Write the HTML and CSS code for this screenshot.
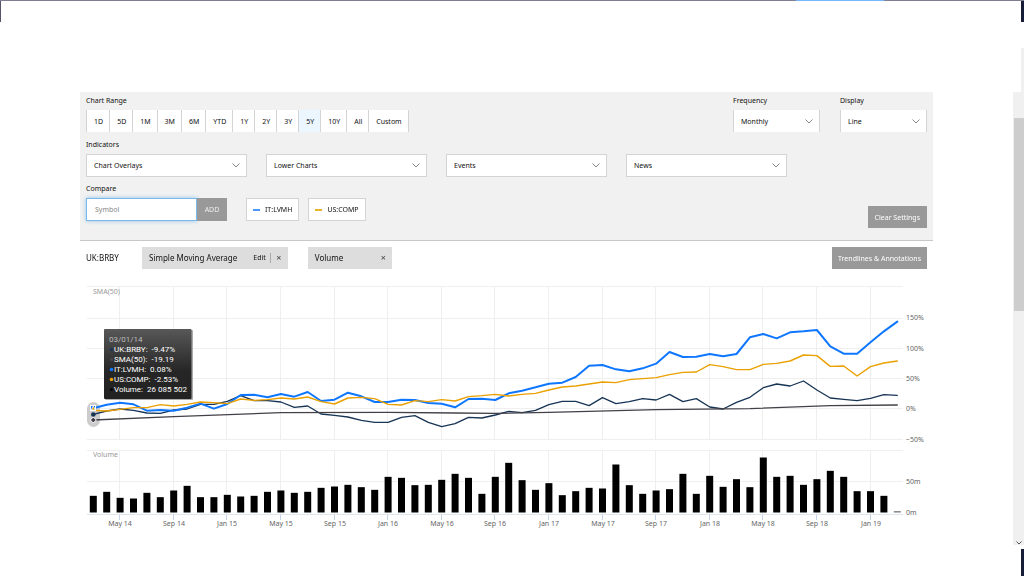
FILE: index.html
```html
<!DOCTYPE html>
<html lang="en">
<head>
<meta charset="utf-8">
<title>UK:BRBY chart</title>
<link rel="stylesheet" href="styles.css">
</head>
<body>
<div class="top-line"><span class="top-accent"></span></div>
<div class="page">
  <main class="content">
    <form class="settings">
      <div class="row row-range">
        <div>
          <div class="label" id="range-label">Chart Range</div>
          <div class="ranges" role="group" aria-labelledby="range-label">
            <button type="button">1D</button><button type="button">5D</button><button type="button">1M</button><button type="button">3M</button><button type="button">6M</button><button type="button">YTD</button><button type="button">1Y</button><button type="button">2Y</button><button type="button">3Y</button><button type="button" class="active">5Y</button><button type="button">10Y</button><button type="button">All</button><button type="button">Custom</button>
          </div>
        </div>
        <div class="view-options">
          <div class="field">
            <label class="label" for="frequency">Frequency</label>
            <select id="frequency" class="select"><option>Monthly</option></select>
          </div>
          <div class="field">
            <label class="label" for="display">Display</label>
            <select id="display" class="select"><option>Line</option></select>
          </div>
        </div>
      </div>
      <div class="label" id="indicators-label">Indicators</div>
      <div class="indicators" role="group" aria-labelledby="indicators-label">
        <select class="select tall" aria-label="Chart Overlays"><option>Chart Overlays</option></select>
        <select class="select tall" aria-label="Lower Charts"><option>Lower Charts</option></select>
        <select class="select tall" aria-label="Events"><option>Events</option></select>
        <select class="select tall" aria-label="News"><option>News</option></select>
      </div>
      <div class="row">
        <div>
          <label class="label" for="symbol">Compare</label>
          <div class="compare">
            <input id="symbol" class="symbol" type="text" placeholder="Symbol" autofocus>
            <button type="button" class="add">ADD</button>
            <button type="button" class="ticker ticker-blue">IT:LVMH</button>
            <button type="button" class="ticker ticker-gold">US:COMP</button>
          </div>
        </div>
        <button type="button" class="grey-button clear">Clear Settings</button>
      </div>
    </form>
    <div class="toolbar">
      <span class="instrument">UK:BRBY</span>
      <span class="chip"><span class="chip-name">Simple Moving Average</span><button type="button" class="edit">Edit</button><button type="button" class="close" aria-label="Remove Simple Moving Average">×</button></span>
      <span class="chip chip-volume"><span class="chip-name">Volume</span><button type="button" class="close" aria-label="Remove Volume">×</button></span>
      <button type="button" class="grey-button trend">Trendlines &amp; Annotations</button>
    </div>
    <svg class="chart" viewBox="80 280 853 256" role="img" aria-label="Price comparison and volume chart">
      <defs>
        <linearGradient id="tip" x1="0" y1="0" x2="0" y2="1">
          <stop offset="0" stop-color="#585858"/><stop offset="0.6" stop-color="#262626"/><stop offset="1" stop-color="#222"/>
        </linearGradient>
      </defs>
      <g id="grid" class="grid"></g>
      <g class="pane-title"><text x="93" y="294">SMA(50)</text><text x="93" y="457">Volume</text></g>
      <g id="bars"></g>
      <path class="axis" d="M87 514.500H903"/>
      <g id="axis-labels" class="axis-label"></g>
      <rect class="halo" x="87" y="402" width="13" height="25" rx="6.500"/>
      <g id="series" class="series"></g>
      <g>
        <rect x="90.500" y="405.500" width="5" height="5" fill="#0f77ff" stroke="#fff"/>
        <path d="M93.300 406l2 4h-4z" fill="#eaa000" stroke="#fff" stroke-width=".7"/>
        <circle cx="93.300" cy="414.500" r="2.300" fill="#173455"/>
        <path d="M93.300 417l3 3-3 3-3-3z" fill="#444048" stroke="#fff"/>
      </g>
      <g class="tooltip">
        <rect class="tip-shadow" x="105" y="330" width="88" height="70" rx="1"/>
        <rect x="104" y="329" width="87.500" height="70" rx="1" fill="url(#tip)"/>
        <text class="tip-date" x="109" y="342">03/01/14</text>
        <text x="114" y="352">UK:BRBY:&#160; -9.47%</text>
        <text x="114" y="362">SMA(50):&#160; -19.19</text>
        <text x="114" y="372">IT:LVMH:&#160; 0.08%</text>
        <text x="114" y="382">US:COMP:&#160; -2.53%</text>
        <text x="114" y="392">Volume:&#160; 26 085 502</text>
        <circle cx="111.500" cy="349.500" r="1.500" fill="#173455"/>
        <circle cx="111.500" cy="359.500" r="1.500" fill="#4b474f"/>
        <circle cx="111.500" cy="369.500" r="1.800" fill="#0f77ff"/>
        <circle cx="111.500" cy="379.500" r="1.800" fill="#eaa000"/>
        <circle cx="111.500" cy="389.500" r="1.500" fill="#000"/>
      </g>
    </svg>
  </main>
  <div class="rail">
    <div class="rail-dark"></div>
    <div class="rail-light"></div>
    <div class="scroll-track">
      <div class="scroll-thumb"></div>
      <svg class="scroll-arrow" viewBox="0 0 6 4"><path d="M.5.500L3 3 5.500.500"/></svg>
    </div>
    <div class="rail-dark rail-end"></div>
  </div>
</div>
<script src="chart.js"></script>
</body>
</html>
```
FILE: styles.css
```css
* { box-sizing: border-box; }
body {
  margin: 0;
  min-height: 100vh;
  display: flex;
  flex-direction: column;
  background: #fff;
  color: #111;
  font: 7px/10px "Noto Sans", "Open Sans", sans-serif;
}
button, input, select { font: inherit; color: inherit; margin: 0; border-radius: 0; }
button { border: 0; padding: 0; background: none; white-space: nowrap; }

.top-line { height: 1px; background: #807f92; display: flex; justify-content: flex-end; padding-right: 140px; }
.top-accent { width: 88px; background: #77b7fb; }
.page { flex: 1; display: flex; }
.content { flex: 1; min-width: 0; padding: 91px 80px 0; position: relative; }
.content::before { content: ""; position: absolute; left: 0; top: 0; width: 1px; height: 21px; background: #555568; }

.settings { background: #f1f1f1; border-bottom: 1px solid #c8c8c8; padding: 3px 6px 12px 6px; }
.row { display: flex; justify-content: space-between; }
.row-range { margin-bottom: 7px; }
.label { display: block; height: 15px; line-height: 11px; }
.ranges { display: flex; }
.ranges button { height: 22px; padding: 1px 6px 0 7px; background: #fff; border-left: 1px solid #d4d4d4; }
.ranges button:last-child { border-right: 1px solid #d4d4d4; }
.ranges .active { background: #ebf6ff; }
.view-options { display: flex; gap: 20px; }
.field { width: 87px; }
.select {
  display: block;
  width: 100%;
  height: 22px;
  padding: 1px 18px 0 7px;
  appearance: none;
  border: 1px solid #d4d4d4;
  border-width: 0 1px;
  background: #fff url("data:image/svg+xml,%3Csvg xmlns='http://www.w3.org/2000/svg' width='8' height='5'%3E%3Cpath d='M.5.5L4 4 7.5.5' fill='none' stroke='%23888'/%3E%3C/svg%3E") no-repeat right 6px center;
}
.select.tall { height: 23px; border-width: 1px; }
.indicators { display: grid; grid-template-columns: repeat(4, minmax(0, 1fr)); gap: 19px; margin: 0 140px 6px 0; }
.compare { display: flex; height: 23px; }
.symbol { width: 111px; padding: 0 8px; border: 1px solid #7db9e8; background: #fff; box-shadow: 0 0 4px #8fc4ee; outline: 0; }
.symbol::placeholder { color: #888; opacity: 1; }
.add { width: 30px; margin-right: 19px; background: #999; color: #eee; }
.ticker { display: flex; align-items: center; gap: 5px; padding: 0 6px; border: 1px solid #d4d4d4; background: #fff; margin-right: 9px; }
.ticker::before { content: ""; width: 7px; height: 2px; background: #4c96ff; }
.ticker-gold::before { background: #e8b62e; }
.grey-button { height: 22px; padding: 1px 7px 0; background: #999; color: #fff; }
.clear { margin-top: 23px; }

.toolbar { display: flex; align-items: center; padding: 6px 6px 0; margin-bottom: 11px; font-size: 8px; }
.instrument { width: 56px; }
.chip { display: flex; align-items: center; height: 22px; padding: 0 5px 0 7px; background: #ddd; margin-right: 20px; }
.edit { margin-left: 16px; font-size: 7px; }
.close { width: 8px; font-size: 9px; color: #444; }
.edit + .close { width: 13px; border-left: 1px solid #aaa; margin-left: 4px; padding-left: 4px; }
.chip-volume .close { margin-left: 36px; }
.trend { margin-left: auto; padding: 1px 6px 0; font-size: 7px; }

.chart { display: block; width: 100%; height: auto; font-size: 7px; }
.grid { stroke: #efefef; }
.pane-title { fill: #999; }
.axis { stroke: #dfe6f0; stroke-width: 1; }
.tick { stroke: #c4d4e6; }
.axis-label { fill: #666; }
.axis-label .month { text-anchor: middle; }
.halo { fill: #ccc; }
.series polyline { fill: none; stroke-linejoin: round; stroke-linecap: round; }
.tooltip { fill: #fff; font-family: Roboto, "Noto Sans", sans-serif; font-size: 8px; }
.tip-shadow { fill: #aaa; }
.tip-date { fill: #bbb; }

.rail { width: 11px; display: flex; flex-direction: column; align-items: flex-end; }
.rail-dark { width: 3px; height: 21px; background: #171c38; }
.rail-light { width: 3px; height: 44px; margin-top: 26px; background: #f0f0f0; }
.scroll-track { width: 100%; flex: 1; background: #f0f0f0; display: flex; flex-direction: column; align-items: center; justify-content: space-between; padding-top: 26px; }
.scroll-thumb { width: 10px; height: 193px; background: #cdcdcd; }
.scroll-arrow { width: 6px; height: 4px; fill: none; stroke: #555; }
.rail-end { height: 27px; margin-top: 4px; }
```
FILE: chart.js
```js
const NS = "http://www.w3.org/2000/svg";
const FIRST_X = 93.3;
const STEP = 13.4;

function add(parent, name, attrs, text) {
  const el = document.createElementNS(NS, name);
  for (const key in attrs) el.setAttribute(key, attrs[key]);
  if (text) el.textContent = text;
  document.getElementById(parent).appendChild(el);
}
const xAt = i => FIRST_X + STEP * i;

const months = ["May 14", "Sep 14", "Jan 15", "May 15", "Sep 15", "Jan 16", "May 16", "Sep 16", "Jan 17", "May 17", "Sep 17", "Jan 18", "May 18", "Sep 18", "Jan 19"];
months.forEach((name, i) => {
  const x = Math.round(xAt(2 + 4 * i)) - 0.5;
  add("grid", "path", { d: `M${x} 287V439M${x} 450V514` });
  add("axis-labels", "path", { class: "tick", d: `M${x} 515V520` });
  add("axis-labels", "text", { class: "month", x: x + 0.5, y: 526 }, name);
});
[286.5, 318.5, 348.5, 378.5, 408.5, 439.5, 450.5, 481.5].forEach(y => add("grid", "path", { d: `M87 ${y}H903` }));
[["150%", 320], ["100%", 351], ["50%", 381], ["0%", 411], ["−50%", 442], ["50m", 484], ["0m", 515]]
  .forEach(([text, y]) => add("axis-labels", "text", { x: 906, y }, text));

// Volume bars, three units to one pixel of height.
[50, 62, 44, 42, 59, 46, 66, 80, 46, 46, 53, 48, 50, 62, 66, 59, 62, 74, 78, 83, 76, 68, 107, 104, 82, 83, 98, 116, 104, 56, 107,
 149, 97, 68, 88, 52, 64, 74, 72, 144, 82, 56, 66, 70, 116, 56, 110, 77, 100, 76, 165, 107, 110, 83, 100, 125, 107, 64, 64, 50, 4]
  .forEach((v, i) => add("bars", "rect", { x: xAt(i) - 3.5, y: 512.5 - v / 3, width: 7, height: v / 3, fill: i === 60 ? "#777" : "#000" }));

// Each series is a list of depths below y = 300, three units to one pixel.
function line(points, color, width) {
  add("series", "polyline", { points: points.map(([i, v]) => `${xAt(i)},${300 + v / 3}`).join(" "), stroke: color, "stroke-width": width });
}
const monthly = list => list.map((v, i) => [i, v]);

line(monthly([343, 333, 327, 331, 339, 340, 330, 327, 313, 313, 304, 287, 302, 302, 306, 322, 318, 342, 346, 351, 361, 367, 367, 352, 347, 367, 380, 371, 352, 354, 345,
  334, 338, 331, 314, 304, 304, 317, 293, 311, 305, 296, 300, 283, 305, 296, 321, 327, 307, 292, 263, 252, 258, 243, 270, 294, 298, 302, 295, 284, 286]), "#173455", 1.3);
line([[0, 360], [6, 350], [14, 338], [22, 337], [27, 339], [30, 340], [34, 337], [42, 329], [49, 326], [55, 317], [60, 315]], "#444048", 1.3);
line(monthly([325, 314, 308, 313, 332, 330, 332, 323, 311, 326, 312, 285, 284, 292, 282, 290, 276, 303, 299, 278, 289, 306, 306, 299, 300, 309, 311, 322, 297, 296, 300,
  280, 272, 262, 251, 248, 231, 197, 195, 208, 214, 205, 191, 156, 171, 170, 162, 169, 162, 112, 102, 115, 97, 94, 90, 139, 161, 161, 127, 94, 65]), "#0f77ff", 2);
line(monthly([331, 333, 328, 323, 323, 314, 318, 313, 306, 308, 311, 297, 301, 299, 294, 297, 291, 305, 312, 294, 292, 296, 313, 315, 302, 305, 299, 303, 290, 287, 283,
  288, 283, 280, 270, 261, 258, 252, 246, 248, 239, 236, 233, 224, 217, 216, 194, 200, 209, 209, 193, 190, 183, 165, 167, 199, 198, 228, 200, 189, 183]), "#eaa000", 1.4);
```
